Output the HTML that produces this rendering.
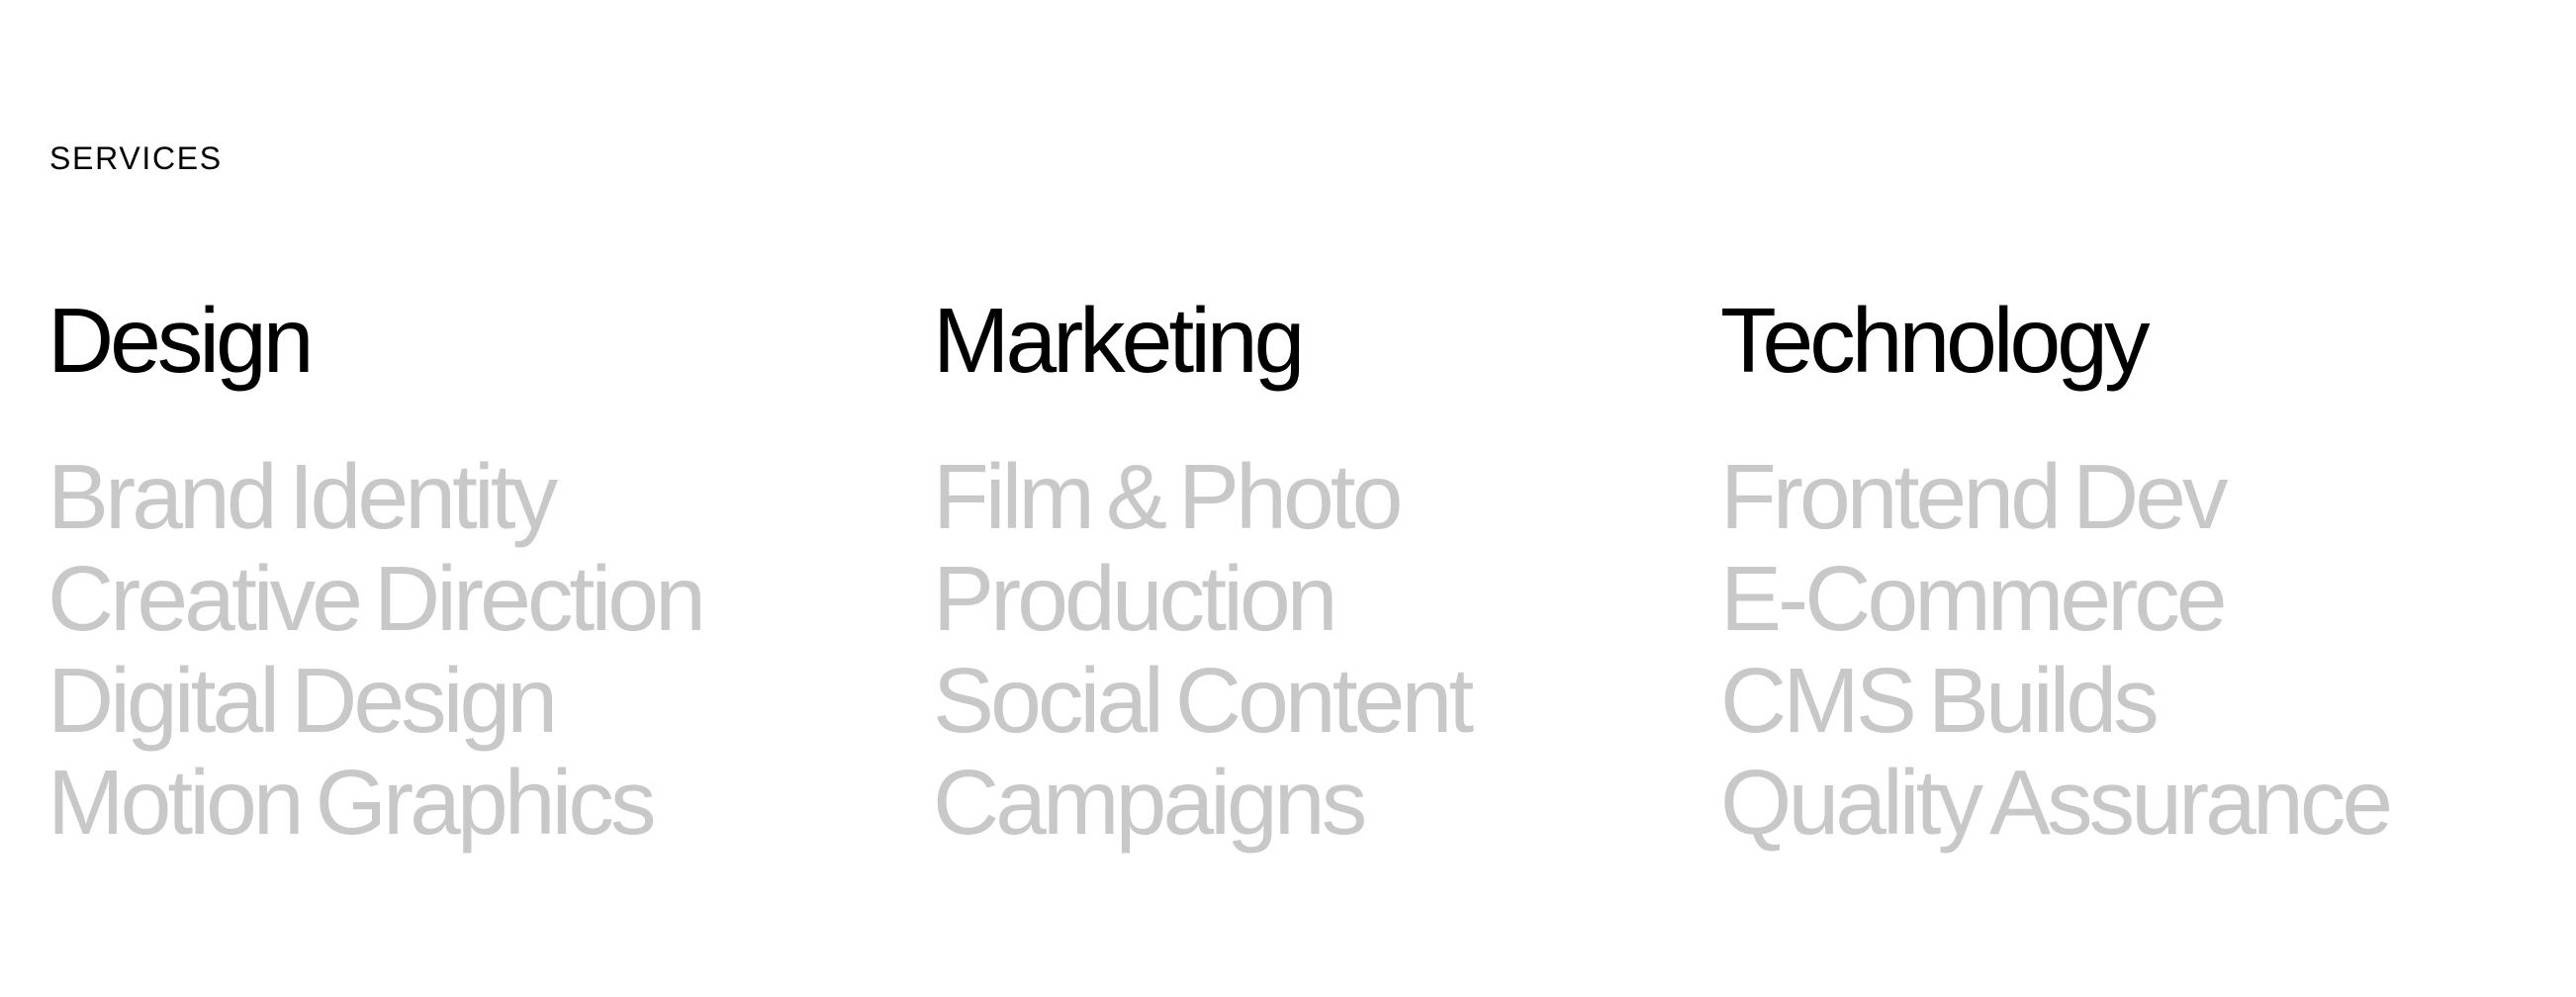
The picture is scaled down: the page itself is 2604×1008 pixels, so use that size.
<!DOCTYPE html>
<html><head><meta charset="utf-8"><style>
html,body{margin:0;padding:0;background:#fff;width:2604px;height:1008px;overflow:hidden}
body{font-family:"Liberation Sans",Arial,sans-serif;position:relative}
.lab{position:absolute;left:50px;top:144px;font-size:32px;line-height:32px;letter-spacing:1.7px;color:#000}
.col{position:absolute;top:298px}
.h{font-size:93px;line-height:92px;letter-spacing:-4px;color:#000;white-space:nowrap}
.l{position:absolute;top:153px;font-size:93px;line-height:103px;letter-spacing:-3.9px;word-spacing:-7px;color:#c8c8c8;white-space:nowrap}
</style></head><body>
<div class="lab">SERVICES</div>
<div class="col" style="left:48px"><div class="h">Design</div><div class="l">Brand Identity<br>Creative Direction<br>Digital Design<br>Motion Graphics</div></div>
<div class="col" style="left:943px"><div class="h">Marketing</div><div class="l">Film &amp; Photo<br>Production<br>Social Content<br>Campaigns</div></div>
<div class="col" style="left:1739px"><div class="h">Technology</div><div class="l">Frontend Dev<br>E-Commerce<br>CMS Builds<br>Quality Assurance</div></div>
</body></html>
